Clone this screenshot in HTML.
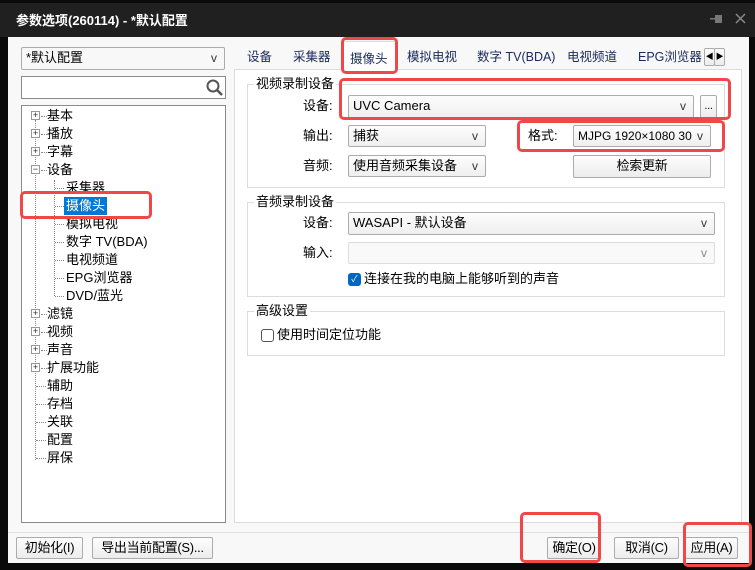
<!DOCTYPE html>
<html><head><meta charset="utf-8"><style>
*{box-sizing:border-box;margin:0;padding:0}
body{width:755px;height:570px;background:#0a0a0a;position:relative;overflow:hidden;font-family:"Liberation Sans","Noto Sans CJK SC",sans-serif;font-size:13px;color:#000}
.a{position:absolute}
.title{left:0;top:0;width:755px;height:37px;background:#202020;border-top:3px solid #0a0a0a}
.win{left:8px;top:37px;width:741px;height:526px;background:#f8f8f8}
.box{position:absolute;background:#fff;border:1px solid #8a8a8a}
.cb{position:absolute;background:linear-gradient(#fdfdfd,#efefef);border:1px solid #acacac;border-radius:2px;line-height:20px;padding-left:4px;white-space:nowrap}
.cb .v{position:absolute;right:7px;top:0;font-size:12px;color:#333}
.btn{position:absolute;background:linear-gradient(#fdfdfd,#ececec);border:1px solid #acacac;border-radius:2px;text-align:center;line-height:20px;letter-spacing:-0.3px}
.red{position:absolute;border:3px solid #f04848;border-radius:5px}
.grp{position:absolute;border:1px solid #dcdcdc}
.gl{position:absolute;background:#fff;padding:0 2px;line-height:16px}
.t{position:absolute;line-height:18px;white-space:nowrap}
.tab{position:absolute;line-height:18px;white-space:nowrap;color:#1a2a5a;font-size:12.5px}
.ex{position:absolute;width:9px;height:9px;border:1px solid #999;background:#fff;font-size:9px;line-height:7px;text-align:center;color:#224}
.h{position:absolute;width:6px;border-top:1px dotted #888}
.lbl{position:absolute;line-height:20px}
</style></head><body>
<div class="a title"></div>
<div class="a" style="left:16px;top:10px;color:#fff;font-weight:bold;font-size:13px">参数选项(260114) - *默认配置</div>
<svg class="a" style="left:710px;top:13px" width="14" height="12"><rect x="0" y="5" width="5" height="1.5" fill="#777"/><rect x="5" y="2" width="7" height="8" fill="#777"/></svg>
<svg class="a" style="left:735px;top:13px" width="11" height="11"><path d="M1 1L10 10M10 1L1 10" stroke="#888" stroke-width="1.5"/></svg>
<div class="a win"></div>
<div class="a" style="left:8px;top:532px;width:741px;height:1px;background:#e0e0e0"></div>

<div class="cb" style="left:21px;top:47px;width:204px;height:23px;background:#f8f8f8">*默认配置<span class="v">v</span></div>
<div class="box" style="left:21px;top:76px;width:205px;height:23px"></div>
<svg class="a" style="left:205px;top:78px" width="20" height="20"><circle cx="8" cy="8" r="5.5" stroke="#555" stroke-width="2" fill="none"/><line x1="12" y1="12" x2="17" y2="17" stroke="#555" stroke-width="2.5"/></svg>
<div class="box" style="left:21px;top:105px;width:205px;height:418px"></div>
<div class="a" style="left:35px;top:120px;height:340px;border-left:1px dotted #888"></div>
<div class="a" style="left:54px;top:180px;height:116px;border-left:1px dotted #888"></div>
<div class="h" style="left:41px;top:116px"></div><div class="h" style="left:41px;top:134px"></div><div class="h" style="left:41px;top:152px"></div><div class="h" style="left:41px;top:170px"></div>
<div class="h" style="left:55px;top:188px;width:9px"></div><div class="h" style="left:55px;top:206px;width:9px"></div><div class="h" style="left:55px;top:224px;width:9px"></div><div class="h" style="left:55px;top:242px;width:9px"></div><div class="h" style="left:55px;top:260px;width:9px"></div><div class="h" style="left:55px;top:278px;width:9px"></div><div class="h" style="left:55px;top:296px;width:9px"></div>
<div class="h" style="left:41px;top:314px"></div><div class="h" style="left:41px;top:332px"></div><div class="h" style="left:41px;top:350px"></div><div class="h" style="left:41px;top:368px"></div>
<div class="h" style="left:36px;top:386px;width:10px"></div><div class="h" style="left:36px;top:404px;width:10px"></div><div class="h" style="left:36px;top:422px;width:10px"></div><div class="h" style="left:36px;top:440px;width:10px"></div><div class="h" style="left:36px;top:458px;width:10px"></div>

<div class="ex" style="left:31px;top:111px">+</div><div class="t" style="left:47px;top:107px">基本</div>
<div class="ex" style="left:31px;top:129px">+</div><div class="t" style="left:47px;top:125px">播放</div>
<div class="ex" style="left:31px;top:147px">+</div><div class="t" style="left:47px;top:143px">字幕</div>
<div class="ex" style="left:31px;top:165px">−</div><div class="t" style="left:47px;top:161px">设备</div>
<div class="t" style="left:66px;top:179px">采集器</div>
<div class="t" style="left:64px;top:197px;background:#0078d7;color:#fff;padding:0 2px">摄像头</div>
<div class="t" style="left:66px;top:215px">模拟电视</div>
<div class="t" style="left:66px;top:233px">数字 TV(BDA)</div>
<div class="t" style="left:66px;top:251px">电视频道</div>
<div class="t" style="left:66px;top:269px">EPG浏览器</div>
<div class="t" style="left:66px;top:287px">DVD/蓝光</div>
<div class="ex" style="left:31px;top:309px">+</div><div class="t" style="left:47px;top:305px">滤镜</div>
<div class="ex" style="left:31px;top:327px">+</div><div class="t" style="left:47px;top:323px">视频</div>
<div class="ex" style="left:31px;top:345px">+</div><div class="t" style="left:47px;top:341px">声音</div>
<div class="ex" style="left:31px;top:363px">+</div><div class="t" style="left:47px;top:359px">扩展功能</div>
<div class="t" style="left:47px;top:377px">辅助</div>
<div class="t" style="left:47px;top:395px">存档</div>
<div class="t" style="left:47px;top:413px">关联</div>
<div class="t" style="left:47px;top:431px">配置</div>
<div class="t" style="left:47px;top:449px">屏保</div>

<div class="a" style="left:234px;top:69px;width:508px;height:454px;background:#fff;border:1px solid #dcdcdc"></div>
<div class="a" style="left:343px;top:41px;width:53px;height:30px;background:#fff;border:1px solid #dcdcdc;border-bottom:none"></div>
<div class="tab" style="left:247px;top:48px">设备</div>
<div class="tab" style="left:293px;top:48px">采集器</div>
<div class="tab" style="left:350px;top:50px">摄像头</div>
<div class="tab" style="left:407px;top:48px">模拟电视</div>
<div class="tab" style="left:477px;top:48px">数字 TV(BDA)</div>
<div class="tab" style="left:567px;top:48px">电视频道</div>
<div class="tab" style="left:638px;top:48px">EPG浏览器</div>
<div class="btn" style="left:704px;top:48px;width:11px;height:18px;font-size:8px;line-height:16px">◀</div>
<div class="btn" style="left:714px;top:48px;width:11px;height:18px;font-size:8px;line-height:16px">▶</div>

<div class="grp" style="left:247px;top:84px;width:478px;height:104px"></div>
<div class="gl" style="left:254px;top:76px">视频录制设备</div>
<div class="lbl" style="left:303px;top:96px">设备:</div>
<div class="cb" style="left:348px;top:95px;width:346px;height:23px">UVC Camera<span class="v">v</span></div>
<div class="btn" style="left:700px;top:95px;width:17px;height:23px;font-size:11px">...</div>
<div class="lbl" style="left:303px;top:126px">输出:</div>
<div class="cb" style="left:348px;top:125px;width:138px;height:22px">捕获<span class="v">v</span></div>
<div class="lbl" style="left:528px;top:126px">格式:</div>
<div class="cb" style="left:573px;top:125px;width:138px;height:22px;font-size:12px">MJPG 1920×1080 30<span class="v">v</span></div>
<div class="lbl" style="left:303px;top:156px">音频:</div>
<div class="cb" style="left:348px;top:155px;width:138px;height:22px">使用音频采集设备<span class="v">v</span></div>
<div class="btn" style="left:573px;top:155px;width:138px;height:23px">检索更新</div>

<div class="grp" style="left:247px;top:202px;width:478px;height:95px"></div>
<div class="gl" style="left:254px;top:194px">音频录制设备</div>
<div class="lbl" style="left:303px;top:213px">设备:</div>
<div class="cb" style="left:348px;top:212px;width:367px;height:23px">WASAPI - 默认设备<span class="v">v</span></div>
<div class="lbl" style="left:303px;top:243px">输入:</div>
<div class="cb" style="left:348px;top:242px;width:367px;height:22px;background:#f9f9f9;border-color:#ddd"><span class="v" style="color:#888">v</span></div>
<div class="a" style="left:348px;top:273px;width:13px;height:13px;background:#0067c0;border-radius:3px;color:#fff;font-size:9px;line-height:13px;text-align:center">✓</div>
<div class="lbl" style="left:364px;top:269px">连接在我的电脑上能够听到的声音</div>

<div class="grp" style="left:247px;top:311px;width:478px;height:45px"></div>
<div class="gl" style="left:254px;top:303px">高级设置</div>
<div class="a" style="left:261px;top:329px;width:13px;height:13px;border:1px solid #555;border-radius:3px;background:#fff"></div>
<div class="lbl" style="left:277px;top:325px">使用时间定位功能</div>

<div class="btn" style="left:16px;top:537px;width:67px;height:22px">初始化(I)</div>
<div class="btn" style="left:92px;top:537px;width:121px;height:22px">导出当前配置(S)...</div>
<div class="btn" style="left:547px;top:537px;width:54px;height:22px">确定(O)</div>
<div class="btn" style="left:614px;top:537px;width:65px;height:22px">取消(C)</div>
<div class="btn" style="left:685px;top:537px;width:53px;height:22px">应用(A)</div>

<div class="red" style="left:341px;top:37px;width:57px;height:37px"></div>
<div class="red" style="left:339px;top:78px;width:392px;height:42px"></div>
<div class="red" style="left:517px;top:120px;width:208px;height:32px"></div>
<div class="red" style="left:20px;top:191px;width:132px;height:28px"></div>
<div class="red" style="left:520px;top:512px;width:81px;height:51px"></div>
<div class="red" style="left:683px;top:522px;width:69px;height:45px"></div>
</body></html>
